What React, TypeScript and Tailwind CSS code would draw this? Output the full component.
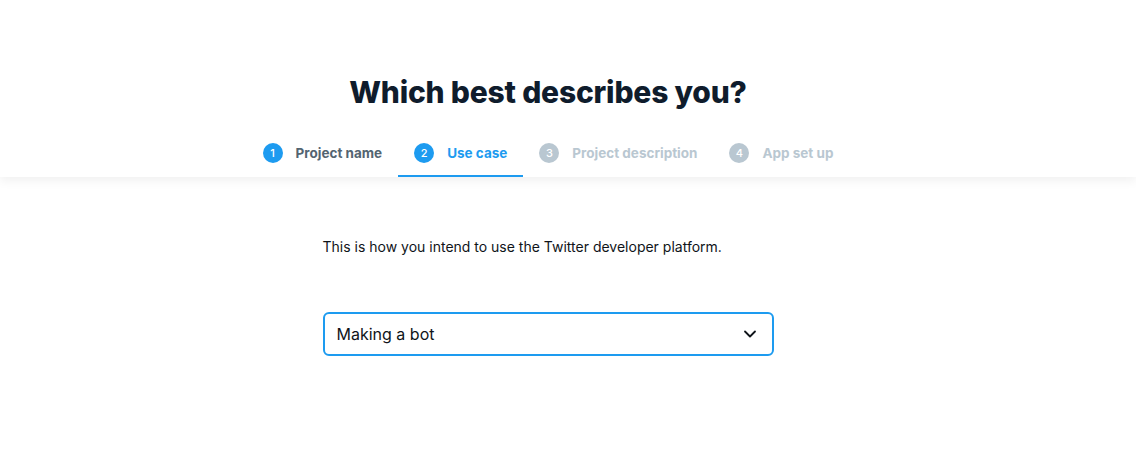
import { ChevronDown } from 'lucide-react';

const steps = [
  { n: 1, label: 'Project name', state: 'done' },
  { n: 2, label: 'Use case', state: 'active' },
  { n: 3, label: 'Project description', state: 'todo' },
  { n: 4, label: 'App set up', state: 'todo' },
];

function Step({ n, label, state }: { n: number; label: string; state: string }) {
  const circle =
    state === 'todo' ? 'bg-[#b9c7d1]' : 'bg-[#1d9bf0]';
  const text =
    state === 'active'
      ? 'text-[#1d9bf0]'
      : state === 'done'
        ? 'text-[#536471]'
        : 'text-[#b9c7d1]';
  return (
    <div
      className={`flex h-[46px] items-center gap-[13px] px-4 ${
        state === 'active' ? 'border-b-2 border-[#1d9bf0]' : 'border-b-2 border-transparent'
      }`}
    >
      <span
        className={`flex h-5 w-5 items-center justify-center rounded-full text-[11px] font-medium text-white ${circle}`}
      >
        {n}
      </span>
      <span className={`text-[13.5px] font-bold ${text}`}>{label}</span>
    </div>
  );
}

export default function App() {
  return (
    <div className="min-h-[465px] bg-white font-['Inter',sans-serif] text-[#0f1419]">
      <header className="relative shadow-[0_4px_10px_rgba(15,20,25,0.06)]">
        <div className="mr-[40px] flex flex-col items-center pt-[72px]">
          <h1 className="text-[30px] font-extrabold leading-[40px] tracking-[-0.2px] text-[#0f1c2c]">
            Which best describes you?
          </h1>
          <nav className="mt-[19px] flex items-end">
            {steps.map((s) => (
              <Step key={s.n} {...s} />
            ))}
          </nav>
        </div>
      </header>
      <main className="mr-[40px] flex justify-center">
        <div className="w-[451px] pt-[60px]">
          <p className="text-[14px] leading-[20px] text-[#0f1419]">
            This is how you intend to use the Twitter developer platform.
          </p>
          <button
            type="button"
            className="mt-[55px] flex h-[44px] w-full items-center justify-between rounded-[6px] border-2 border-[#1d9bf0] pl-3 pr-3 text-left"
          >
            <span className="text-[16px] text-[#0f1419]">Making a bot</span>
            <ChevronDown className="h-5 w-5 text-[#0f1419]" strokeWidth={2.2} />
          </button>
        </div>
      </main>
    </div>
  );
}
